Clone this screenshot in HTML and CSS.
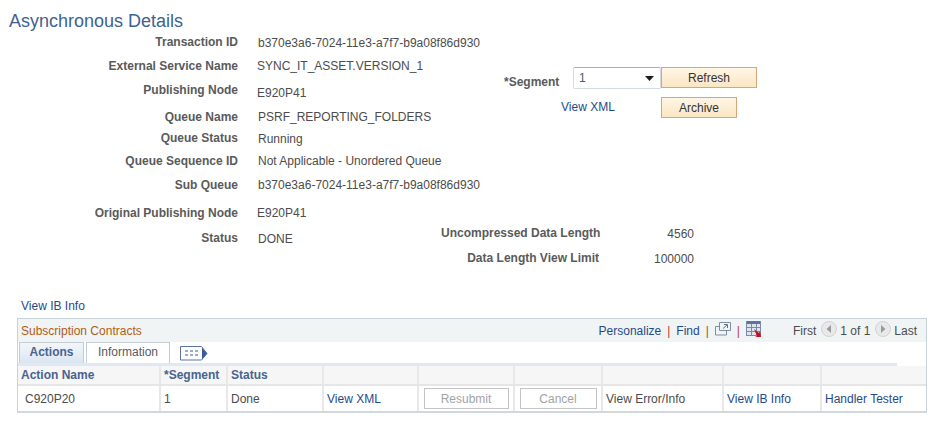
FILE: index.html
```html
<!DOCTYPE html>
<html lang="en">
<head>
<meta charset="utf-8">
<title>Asynchronous Details</title>
<link rel="stylesheet" href="styles.css">
</head>
<body>
<main class="page">
  <h1 class="title">Asynchronous Details</h1>
  <section class="details">
    <div class="fields">
      <div class="field h24"><span class="label">Transaction ID</span><span class="value down1">b370e3a6-7024-11e3-a7f7-b9a08f86d930</span></div>
      <div class="field h24"><span class="label">External Service Name</span><span class="value left1">SYNC_IT_ASSET.VERSION_1</span></div>
      <div class="field h27"><span class="label">Publishing Node</span><span class="value left1 down3">E920P41</span></div>
      <div class="field h21"><span class="label">Queue Name</span><span class="value">PSRF_REPORTING_FOLDERS</span></div>
      <div class="field h23"><span class="label">Queue Status</span><span class="value down1">Running</span></div>
      <div class="field h24"><span class="label">Queue Sequence ID</span><span class="value">Not Applicable - Unordered Queue</span></div>
      <div class="field h28"><span class="label">Sub Queue</span><span class="value">b370e3a6-7024-11e3-a7f7-b9a08f86d930</span></div>
      <div class="field h25"><span class="label">Original Publishing Node</span><span class="value left1">E920P41</span></div>
      <div class="field h24"><span class="label">Status</span><span class="value down1">DONE</span></div>
    </div>
    <div class="side">
      <div class="segment">
        <div class="segment-main">
          <span class="label seg-label"><span class="req">*</span>Segment</span>
          <div class="select">1<svg class="caret" width="9" height="5" viewBox="0 0 9 5"><path d="M0 0h9L4.500 5z" fill="#1c1c1c"/></svg></div>
          <a class="link seg-link">View XML</a>
        </div>
        <div class="segment-buttons">
          <button class="btn btn-refresh" type="button">Refresh</button>
          <button class="btn btn-archive" type="button">Archive</button>
        </div>
      </div>
      <div class="lengths">
        <div class="length"><span class="label">Uncompressed Data Length</span><span class="num">4560</span></div>
        <div class="length"><span class="label">Data Length View Limit</span><span class="num">100000</span></div>
      </div>
    </div>
  </section>

  <a class="link ib-link">View IB Info</a>

  <section class="grid-box">
    <header class="grid-head">
      <span class="grid-title">Subscription Contracts</span>
      <div class="grid-tools">
        <a class="link">Personalize</a><span class="pipe">|</span><a class="link">Find</a><span class="pipe">|</span>
        <svg class="ico-zoom" width="16" height="14" viewBox="0 0 16 14"><path d="M4.500 .5h11v8h-11zM.5 4.500h4M.5 4.500v8.500h11V8.500" fill="none" stroke="#7d8ea3"/><path d="M8 6.500l4-3.500M9 2.500h3.500V6" fill="none" stroke="#5d7290"/></svg>
        <span class="pipe">|</span>
        <svg class="ico-grid" width="16" height="16" viewBox="0 0 16 16"><rect width="15" height="15" fill="#dfe3ec"/><rect width="15" height="3" fill="#5a74a8"/><path d="M.5 0v15M5.500 3v12M10.500 3v12M14.500 0v15M0 6.500h15M0 10.500h15M0 14.500h15" stroke="#7c88a8" fill="none"/><path d="M8 8l5 4 1-2 1 6h-6l2-1z" fill="#c4121c"/></svg>
        <span class="pager">First</span>
        <svg class="ico-nav" width="16" height="16" viewBox="0 0 16 16"><circle cx="8" cy="8" r="7.500" fill="#e9e9e9" stroke="#d2d2d2"/><path d="M10 4v8L5.500 8z" fill="#9a9a9a"/></svg>
        <span class="pager">1 of 1</span>
        <svg class="ico-nav" width="16" height="16" viewBox="0 0 16 16"><circle cx="8" cy="8" r="7.500" fill="#e9e9e9" stroke="#d2d2d2"/><path d="M6 4v8l4.500-4z" fill="#9a9a9a"/></svg>
        <span class="pager">Last</span>
      </div>
    </header>
    <nav class="tabs">
      <span class="tab tab-active">Actions</span>
      <span class="tab tab-idle">Information</span>
      <svg class="ico-tabs" width="28" height="15" viewBox="0 0 28 15"><path d="M.5 .5h21l5.500 7-5.500 6.500h-21z" fill="#fff" stroke="#5a74a8"/><path d="M22 1.500v12l5-6z" fill="#3b5c96"/><path d="M5 5h3M10 5h3M15 5h3M5 9h3M10 9h3M15 9h3" stroke="#3b5c96" fill="none"/></svg>
    </nav>
    <div class="tab-rule"></div>
    <div class="row row-head">
      <div class="cell c1">Action Name</div><div class="cell c2">*Segment</div><div class="cell c3">Status</div><div class="cell c4"></div><div class="cell c5"></div><div class="cell c6"></div><div class="cell c7"></div><div class="cell c8"></div><div class="cell c9"></div>
    </div>
    <div class="row row-body">
      <div class="cell c1 indent">C920P20</div>
      <div class="cell c2">1</div>
      <div class="cell c3">Done</div>
      <div class="cell c4"><a class="link">View XML</a></div>
      <div class="cell c5 center"><button class="btn-off btn-resubmit" type="button" disabled>Resubmit</button></div>
      <div class="cell c6 center"><button class="btn-off btn-cancel" type="button" disabled>Cancel</button></div>
      <div class="cell c7">View Error/Info</div>
      <div class="cell c8"><a class="link">View IB Info</a></div>
      <div class="cell c9"><a class="link">Handler Tester</a></div>
    </div>
  </section>
</main>
</body>
</html>
```
FILE: styles.css
```css
* { box-sizing: border-box; }
html, body { margin: 0; padding: 0; background: #fff; }
body { font: 12px/14px "Liberation Sans", Arial, sans-serif; color: #4c4c4c; }
.page { width: 942px; height: 421px; overflow: hidden; padding-top: 11px; }
.title { margin: 0 0 0 9px; font-size: 18px; line-height: 20px; font-weight: 400; color: #3d6291; }

.details { display: flex; height: 268px; }
.fields { width: 441px; padding-top: 4px; }
.field { display: flex; align-items: flex-start; }
.h21 { height: 21px; } .h23 { height: 23px; } .h24 { height: 24px; } .h25 { height: 25px; } .h27 { height: 27px; } .h28 { height: 28px; }
.label { font-weight: 700; color: #5a5a5a; }
.field .label { width: 238px; text-align: right; flex: none; }
.value { margin-left: 20px; white-space: nowrap; }
.left1 { margin-left: 19px; }
.down1 { margin-top: 1px; }
.down3 { margin-top: 3px; }

.side { width: 270px; }
.segment { display: flex; margin-left: 63px; padding-top: 36px; height: 195px; }
.segment-main { width: 170px; display: grid; grid-template-columns: 69px 88px; grid-template-rows: 22px auto; align-content: start; }
.seg-label { padding-top: 8px; white-space: nowrap; }
.req { font-weight: 700; }
.select { width: 88px; height: 22px; border: 1px solid #d5dbe4; border-top-color: #a9aeb5; border-radius: 2px; padding: 2px 5px; color: #3d5a8a; display: flex; align-items: center; justify-content: space-between; }
.caret { margin-right: 1px; }
.seg-link { grid-column: 1 / 3; margin: 11px 0 0 57px; }
.segment-buttons { display: flex; flex-direction: column; align-items: flex-start; }
.btn { font: 12px/14px "Liberation Sans", Arial, sans-serif; color: #333; height: 21px; padding: 0; border: 1px solid #d7a876; background: linear-gradient(#fff6e6, #fbe6c3); }
.btn-refresh { width: 96px; }
.btn-archive { width: 76px; margin-top: 9px; }

.lengths { margin-top: 0; }
.length { display: flex; width: 253px; height: 25px; }
.length .label { width: 158px; text-align: right; white-space: nowrap; }
.num { flex: 1; text-align: right; padding-top: 1px; }

.link { color: #1f4a8c; text-decoration: none; white-space: nowrap; }
.ib-link { display: block; margin: 0 0 0 21px; }

.grid-box { margin: 5px 0 0 17px; width: 910px; height: 95px; border: 1px solid #c9d1d9; border-bottom-width: 2px; border-bottom-color: #d0d7de; }
.grid-head { height: 23px; background: #f0f4f5; display: flex; justify-content: space-between; align-items: center; padding: 0 9px 0 3px; }
.grid-title { color: #b35c14; }
.grid-tools { display: flex; align-items: center; }
.pipe { color: #c0392b; margin: 0 6px; }
.ico-zoom { margin-bottom: 3px; }
.ico-grid { margin-bottom: 4px; }
.pager { color: #4c4c4c; }
.ico-grid + .pager { margin-left: 31px; }
.ico-nav { margin: 0 3px 3px 5px; }
.tabs { height: 21px; display: flex; align-items: flex-end; padding-left: 1px; }
.tab { height: 21px; text-align: center; line-height: 19px; border: 1px solid #c4ccd4; border-bottom: 0; }
.tab-active { width: 65px; font-weight: 700; color: #47648f; background: linear-gradient(#f2f6fa, #dbe6f2); }
.tab-idle { width: 84px; margin-left: 2px; color: #5a5a5a; }
.ico-tabs { margin: 0 0 2px 10px; }
.tab-rule { height: 3px; width: 879px; background: #dfe8f3; }
.row { display: flex; }
.row-head { height: 20px; background: #f6f6f6; border-bottom: 2px solid #e6e6e6; font-weight: 700; color: #47648f; }
.row-body { height: 25px; }
.cell { padding: 0 3px; border-right: 2px solid #e8e8e8; display: flex; align-items: center; white-space: nowrap; }
.c9 { border-right: 0; }
.center { justify-content: center; }
.indent { padding-left: 7px; }
.c1 { width: 143px; } .c2 { width: 67px; } .c3 { width: 96px; } .c4 { width: 95px; } .c5 { width: 96px; } .c6 { width: 88px; } .c7 { width: 121px; } .c8 { width: 98px; } .c9 { width: 104px; }
.btn-off { font: 12px/14px "Liberation Sans", Arial, sans-serif; color: #a3a3a3; height: 21px; padding: 0; background: #fff; border: 1px solid #c4c4c4; }
.btn-resubmit { width: 85px; }
.btn-cancel { width: 77px; }
```
